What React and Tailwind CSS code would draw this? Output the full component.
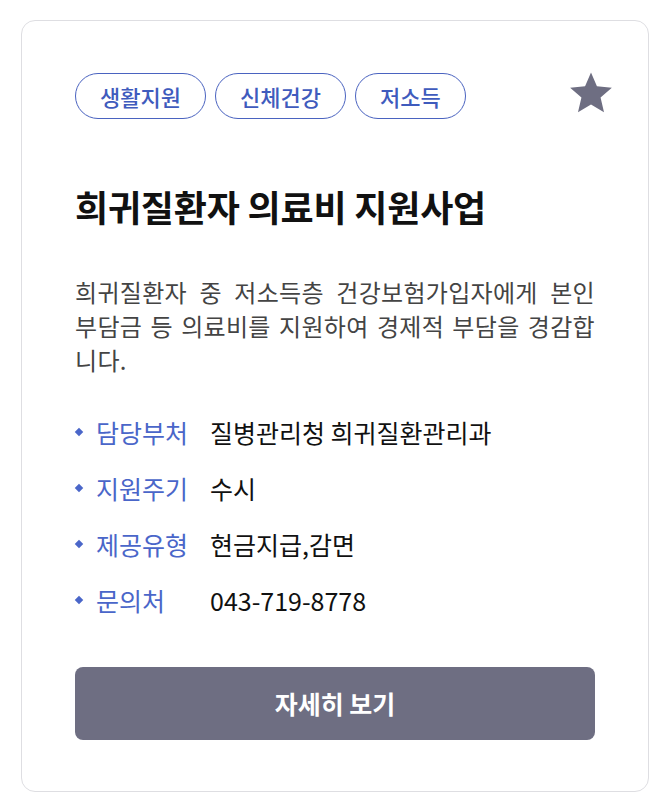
import React from 'react';

const tags = ['생활지원', '신체건강', '저소득'];

const details = [
  { label: '담당부처', value: '질병관리청 희귀질환관리과' },
  { label: '지원주기', value: '수시' },
  { label: '제공유형', value: '현금지급,감면' },
  { label: '문의처', value: '043-719-8778' },
];

export default function App() {
  return (
    <div
      className="min-h-screen bg-white pt-5 pl-[21px]"
      style={{ fontFamily: '"Noto Sans CJK KR", "Noto Sans", sans-serif' }}
    >
      <div className="relative w-[628px] h-[772px] rounded-[14px] border border-[#dedee2] bg-white px-[53px] pt-[52px]">
        {/* Bookmark star */}
        <button className="absolute right-[34px] top-[50px] text-[#6e6e82]">
          <svg width="46" height="44" viewBox="0 0 24 23" fill="currentColor">
            <path d="M12 0.8l3.1 7.2 7.8 0.7-5.9 5.2 1.8 7.7L12 17.5l-6.8 4.1 1.8-7.7L1.1 8.7l7.8-0.7z" />
          </svg>
        </button>

        {/* Tags */}
        <div className="flex gap-[9px]">
          {tags.map((tag) => (
            <span
              key={tag}
              className="flex h-[46px] items-center rounded-full border border-[#4a63c0] px-[24px] text-[22px] font-medium text-[#3f5bbd]"
            >
              {tag}
            </span>
          ))}
        </div>

        <h2 className="mt-[64px] text-[36px] font-bold leading-[46px] tracking-[-0.2px] text-[#111]">
          희귀질환자 의료비 지원사업
        </h2>

        <p className="mt-[46px] text-justify text-[24px] leading-[34px] tracking-[0.3px] text-[#444]">
          희귀질환자 중 저소득층 건강보험가입자에게 본인 부담금 등 의료비를 지원하여 경제적 부담을 경감합니다.
        </p>

        <ul className="mt-[39px] flex flex-col gap-6">
          {details.map((d) => (
            <li key={d.label} className="flex items-center text-[25px] leading-[32px]">
              <span className="ml-[1px] mr-[14px] h-[6px] w-[6px] rotate-45 bg-[#4a66c9]" />
              <span className="w-[114px] shrink-0 text-[#4a66c9]">{d.label}</span>
              <span className="text-[#111]">{d.value}</span>
            </li>
          ))}
        </ul>

        <button className="mt-[51px] flex h-[73px] w-full items-center justify-center rounded-[8px] bg-[#6e6e82] text-[25px] font-bold text-white">
          자세히 보기
        </button>
      </div>
    </div>
  );
}
